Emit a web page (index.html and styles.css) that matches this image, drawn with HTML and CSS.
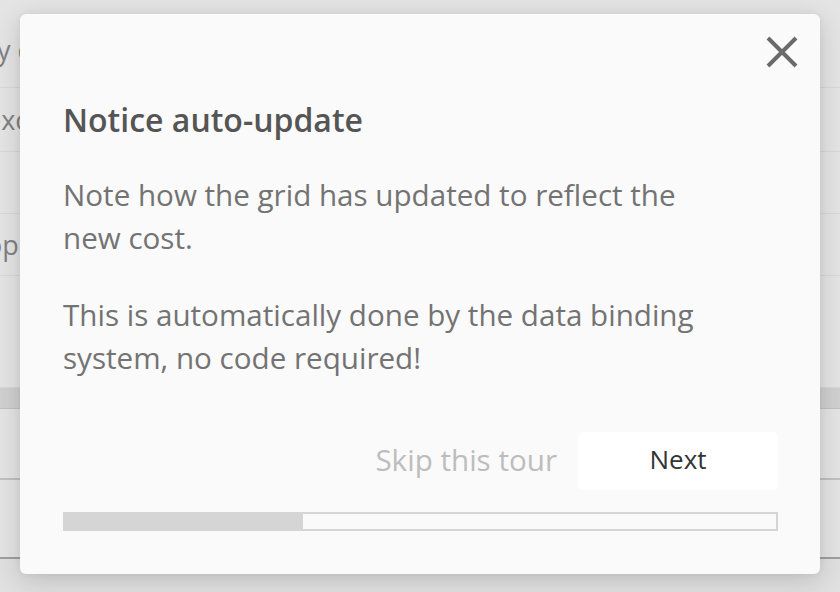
FILE: index.html
```html
<!DOCTYPE html>
<html lang="en">
<head>
<meta charset="utf-8">
<title>Notice auto-update</title>
<link rel="stylesheet" href="styles.css">
</head>
<body>
<div class="grid">
  <div class="row r1"><span class="cell">ry c</span></div>
  <div class="row r2"><span class="cell">exc</span></div>
  <div class="row r3"><span class="cell"></span></div>
  <div class="row r4"><span class="cell">ope</span></div>
  <div class="row r5"><span class="cell"></span></div>
  <div class="row band"></div>
  <div class="row r6"></div>
  <div class="row r7"></div>
  <div class="row foot"></div>
</div>
<div class="dim"></div>
<div class="dialog" role="dialog">
  <button class="close" aria-label="Close">
    <svg width="32" height="32" viewBox="0 0 32 32"><path d="M2 2 L30 30 M30 2 L2 30" stroke="#6a6a6a" stroke-width="4" fill="none"/></svg>
  </button>
  <h2 class="title">Notice auto-update</h2>
  <p class="text">Note how the grid has updated to reflect the new cost.</p>
  <p class="text">This is automatically done by the data binding system, no code required!</p>
  <div class="actions">
    <button class="skip">Skip this tour</button>
    <button class="next">Next</button>
  </div>
  <div class="progress"><div class="fill" style="width:33.5%"></div></div>
</div>
</body>
</html>
```
FILE: styles.css
```css
* { box-sizing: border-box; }
html, body { margin: 0; padding: 0; }
body {
  width: 840px;
  height: 592px;
  overflow: hidden;
  background: #efefef;
  font-family: "Open Sans", "Noto Sans", sans-serif;
  position: relative;
}
.grid { display: flex; flex-direction: column; }
.row {
  display: flex;
  align-items: center;
  background: #f3f3f3;
  border-bottom: 1px solid #e6e6e6;
}
.cell {
  margin-left: -14px;
  font-size: 27px;
  color: #8a8a8a;
}
.r1 { height: 88px; padding-top: 12px; }
.r2 { height: 64px; }
.r3 { height: 62px; }
.r4 { height: 62px; }
.r5 { height: 112px; }
.band { height: 21px; background: #dedede; border-bottom: 1px solid #cfcfcf; }
.r6 { height: 71px; border-bottom: 2px solid #cdcdcd; }
.r7 { height: 79px; border-bottom: 2px solid #a9a9a9; }
.foot { height: 40px; background: #efefef; border: 0; }
.dim {
  position: absolute;
  inset: 0;
  background: rgba(0,0,0,0.06);
}
.dialog {
  position: absolute;
  left: 20px;
  top: 14px;
  width: 800px;
  height: 560px;
  background: #fafafa;
  border-radius: 6px;
  box-shadow: 0 6px 26px rgba(0,0,0,0.16), 0 0 6px rgba(0,0,0,0.05);
  padding: 86px 42px 0 43px;
}
.close {
  position: absolute;
  right: 22px;
  top: 22px;
  width: 32px;
  height: 32px;
  padding: 0;
  border: 0;
  background: none;
  display: flex;
}
.title {
  margin: 0;
  font-size: 32px;
  line-height: 40px;
  font-weight: 600;
  color: #555;
}
.text {
  margin: 33px 0 0;
  width: 660px;
  font-size: 29.6px;
  line-height: 43px;
  color: #737373;
}
.text + .text { margin-top: 34px; }
.actions {
  margin-top: 53px;
  display: flex;
  justify-content: flex-end;
  align-items: center;
  gap: 21px;
}
.skip {
  border: 0;
  background: none;
  padding: 0 0 4px;
  font-family: inherit;
  font-size: 29.6px;
  color: #bdbdbd;
}
.next {
  width: 200px;
  height: 58px;
  border: 0;
  border-radius: 5px;
  background: #fff;
  padding: 0 0 4px;
  font-family: inherit;
  font-size: 26px;
  color: #333;
}
.progress {
  margin-top: 22px;
  height: 19px;
  border: 2px solid #d5d5d5;
  background: #fafafa;
}
.fill { height: 100%; background: #d5d5d5; }
```
